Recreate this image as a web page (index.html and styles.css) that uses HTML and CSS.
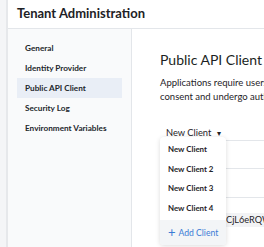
FILE: index.html
```html
<!DOCTYPE html>
<html>
<head>
<meta charset="utf-8">
<link rel="stylesheet" href="styles.css">
</head>
<body>
<div class="gutter"></div>
<div class="app">
  <header class="topbar">Tenant Administration</header>
  <div class="layout">
    <nav class="sidebar">
      <a class="nav-item">General</a>
      <a class="nav-item">Identity Provider</a>
      <a class="nav-item active">Public API Client</a>
      <a class="nav-item">Security Log</a>
      <a class="nav-item">Environment Variables</a>
    </nav>
    <main class="main">
      <h1 class="title">Public API Client</h1>
      <p class="desc">Applications require users to give consent and undergo authentication.</p>
      <div class="picker">
        <button class="picker-btn">New Client <span class="caret">▾</span></button>
        <div class="menu">
          <div class="menu-item">New Client</div>
          <div class="menu-item">New Client 2</div>
          <div class="menu-item">New Client 3</div>
          <div class="menu-item">New Client 4</div>
          <div class="menu-add"><span class="plus">+</span>Add Client</div>
        </div>
      </div>
      <div class="rows">
        <div class="row r1"></div>
        <div class="row r2"></div>
        <div class="row r3"></div>
        <div class="field">CjL6eRQWx9</div>
      </div>
    </main>
  </div>
</div>
</body>
</html>
```
FILE: styles.css
```css
* { box-sizing: border-box; }
html, body { margin: 0; height: 100%; }
body {
  display: flex;
  font-family: Lato, "Noto Sans", sans-serif;
  color: #1f2328;
  background: #fff;
  overflow: hidden;
}
.gutter {
  width: 8px;
  flex: none;
  background: #f4f5f7;
  border-right: 2px solid #e6e8eb;
}
.app {
  flex: 1;
  display: flex;
  flex-direction: column;
  min-width: 0;
}
.topbar {
  height: 29px;
  flex: none;
  border-bottom: 1px solid #e3e6ea;
  padding-left: 9px;
  font-weight: 700;
  font-size: 13px;
  line-height: 27px;
  color: #1d2125;
  white-space: nowrap;
}
.layout {
  flex: 1;
  display: flex;
  min-height: 0;
}
.sidebar {
  width: 124px;
  flex: none;
  background: #f9fafb;
  border-right: 1px solid #e3e6ea;
  padding: 9px 9px 0;
  display: flex;
  flex-direction: column;
}
.nav-item {
  height: 20px;
  line-height: 21px;
  padding-left: 8px;
  font-size: 8.2px;
  font-weight: 700;
  color: #22262b;
  white-space: nowrap;
}
.nav-item.active { background: #e9eef6; }
.main {
  flex: 1;
  min-width: 0;
  padding: 21px 0 0 28px;
  white-space: nowrap;
  overflow: hidden;
}
.title {
  margin: 0;
  font-size: 14px;
  font-weight: 400;
  line-height: 20px;
  color: #1b1f23;
}
.desc {
  margin: 6px 0 0;
  font-size: 9.5px;
  line-height: 14px;
  width: 160px;
  white-space: normal;
  color: #1f2328;
}
.picker {
  position: relative;
  margin-top: 16px;
  height: 16px;
}
.picker-btn {
  border: 0;
  background: none;
  padding: 0 0 0 6px;
  font: 400 9.3px Lato, sans-serif;
  height: 16px;
  line-height: 16px;
  color: #1f2328;
}
.caret { font-size: 8px; margin-left: 3px; }
.menu {
  position: absolute;
  left: 0;
  top: 17px;
  width: 66px;
  background: #fff;
  border-radius: 4px;
  box-shadow: 0 1px 5px rgba(0,0,0,0.14);
  padding-top: 2px;
  overflow: hidden;
  z-index: 2;
}
.menu-item {
  height: 19.7px;
  line-height: 20px;
  padding-left: 8px;
  font-size: 7.9px;
  font-weight: 700;
  color: #1f2328;
  white-space: nowrap;
}
.menu-add {
  margin-top: 2px;
  height: 25px;
  line-height: 25px;
  background: #f3f5f7;
  padding-left: 8px;
  font-size: 8.6px;
  font-weight: 400;
  color: #3a7bd5;
  white-space: nowrap;
}
.plus {
  font-size: 13px;
  font-weight: 400;
  margin-right: 3px;
  vertical-align: -1px;
}
.row { border-bottom: 1px solid #e3e6ea; }
.r1 { height: 5px; }
.r2 { height: 28px; }
.r3 { height: 29px; }
.field {
  margin-top: 15px;
  height: 14px;
  line-height: 14px;
  background: #f2f3f5;
  padding-left: 66px;
  font-size: 9.2px;
  font-weight: 400;
  color: #1f2328;
}
```
